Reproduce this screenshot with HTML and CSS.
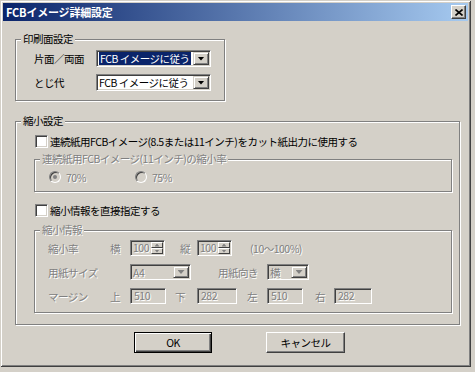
FILE: index.html
```html
<!DOCTYPE html>
<html lang="ja">
<head>
<meta charset="utf-8">
<title>FCBイメージ詳細設定</title>
<link rel="stylesheet" href="styles.css">
</head>
<body>
<div class="dlg">
	<div class="titlebar">
		<span class="ttl">FCBイメージ詳細設定</span>
		<span class="xbtn"><svg width="8" height="7" viewBox="0 0 8 7"><path d="M0.5 0.5L7.5 6.5M7.5 0.5L0.5 6.5" stroke="#000" stroke-width="1.6"/></svg></span>
	</div>
	<div class="main">
		<!-- 印刷面設定 -->
		<fieldset class="grp g1">
			<legend>印刷面設定</legend>
			<div class="g1in">
				<div class="row">
					<span class="w62">片面／両面</span>
					<div class="combo sunk w115"><span class="val"><span class="sel">FCB イメージに従う</span></span><span class="arr"><i class="tri"></i></span></div>
				</div>
				<div class="row">
					<span class="w62">とじ代</span>
					<div class="combo sunk w115"><span class="val">FCB イメージに従う</span><span class="arr"><i class="tri"></i></span></div>
				</div>
			</div>
		</fieldset>

		<!-- 縮小設定 -->
		<fieldset class="grp g2">
			<legend>縮小設定</legend>
			<div class="g2in">
				<div class="chk"><span class="cb"></span><span>連続紙用FCBイメージ(8.5または11インチ)をカット紙出力に使用する</span></div>

				<fieldset class="grp sub subA off">
					<legend>連続紙用FCBイメージ(11インチ)の縮小率</legend>
					<div class="rrow">
						<div class="ropt"><span class="rd on"></span><span>70%</span></div>
						<div class="ropt"><span class="rd"></span><span>75%</span></div>
					</div>
				</fieldset>

				<div class="chk chk2"><span class="cb"></span><span>縮小情報を直接指定する</span></div>

				<fieldset class="grp sub subB off">
					<legend>縮小情報</legend>
					<div class="bin">
						<div class="brow">
							<span class="w62">縮小率</span>
							<span class="w20">横</span>
							<div class="spin sunk"><span class="sv">100</span><span class="ud"><span class="udb"><i class="tri up"></i></span><span class="udb"><i class="tri"></i></span></span></div>
							<span class="w17 ml15">縦</span>
							<div class="spin sunk"><span class="sv">100</span><span class="ud"><span class="udb"><i class="tri up"></i></span><span class="udb"><i class="tri"></i></span></span></div>
							<span class="ml18">(10〜100%)</span>
						</div>
						<div class="brow">
							<span class="w82">用紙サイズ</span>
							<div class="combo sunk dis w61"><span class="val">A4</span><span class="arr"><i class="tri"></i></span></div>
							<span class="w49 ml27">用紙向き</span>
							<div class="combo sunk dis w42"><span class="val">横</span><span class="arr"><i class="tri"></i></span></div>
						</div>
						<div class="brow">
							<span class="w62">マージン</span>
							<span class="w20">上</span>
							<div class="fld sunk w36">510</div>
							<span class="w22 ml9">下</span>
							<div class="fld sunk w40">282</div>
							<span class="w20 ml10">左</span>
							<div class="fld sunk w36">510</div>
							<span class="w19 ml12">右</span>
							<div class="fld sunk w38">282</div>
						</div>
					</div>
				</fieldset>
			</div>
		</fieldset>

		<div class="btns">
			<div class="btn def"><span>OK</span></div>
			<div class="btn"><span>キャンセル</span></div>
		</div>
	</div>
</div>
</body>
</html>
```

FILE: styles.css
```css
*{ box-sizing:border-box;}
body{ margin:0; background:#d4d0c8; font:10.5px "MS UI Gothic","Noto Sans CJK JP",sans-serif; color:#000; letter-spacing:-0.5px;}

.dlg{ width:471px; height:367px; padding:3px; background:#d4d0c8; box-shadow:inset 1px 1px 0 #d4d0c8, inset -1px -1px 0 #404040, inset 2px 2px 0 #fff, inset -2px -2px 0 #808080;}

.titlebar{ height:18px; display:flex; align-items:center; justify-content:space-between; padding:0 2px 0 3px; background:linear-gradient(to right,#0a246a,#a6caf0); color:#fff; font-size:11px; font-weight:bold; letter-spacing:-0.2px;}
.xbtn{ width:15px; height:14px; display:flex; align-items:center; justify-content:center; background:#d4d0c8; border:1px solid; border-color:#fff #404040 #404040 #fff; box-shadow:inset -1px -1px 0 #808080;}

.main{ padding:11px 0 0 12px;}

/* group box */
.grp{ margin:0; padding:0; border:1px solid #808080; box-shadow:inset 1px 1px 0 #fff, 1px 1px 0 #fff; min-width:0;}
.grp legend{ padding:0 2px; margin-left:5px; line-height:14px; height:14px; background:#d4d0c8;}
.off,.off legend{ color:#808080; text-shadow:1px 1px 0 #fff;}

.g1{ width:210px;}
.g1in{ padding:4px 0 9px 18px; display:flex; flex-direction:column; gap:7px;}
.row{ display:flex; align-items:center; height:17px;}

.g2{ width:445px; margin-top:13px;}
.g2in{ padding:6px 0 11px 18px;}
.sub{ width:418px; margin-top:4px;}
.chk{ display:flex; align-items:center; height:14px; gap:2px; margin-left:1px; white-space:nowrap;}
.chk2{ margin-top:11px;}
.subB{ margin-top:6px;}

/* sunken 3d edge */
.sunk{ border:1px solid; border-color:#808080 #fff #fff #808080; box-shadow:inset 1px 1px 0 #404040, inset -1px -1px 0 #d4d0c8;}
.cb{ width:13px; height:13px; flex:none; background:#fff; border:1px solid; border-color:#808080 #fff #fff #808080; box-shadow:inset 1px 1px 0 #404040, inset -1px -1px 0 #d4d0c8;}

.combo{ height:17px; display:flex; align-items:center; background:#fff; padding:0 1px 0 2px;}
.combo .val{ flex:1; display:flex; align-items:center; height:13px; line-height:13px; white-space:nowrap;}
.combo .sel{ background:#0a246a; color:#fff; padding:0 1px; flex:1; height:13px; margin-right:2px;}
.combo .arr{ width:16px; height:13px; flex:none; display:flex; align-items:center; justify-content:center; background:#d4d0c8; border:1px solid; border-color:#d4d0c8 #404040 #404040 #d4d0c8; box-shadow:inset 1px 1px 0 #fff, inset -1px -1px 0 #808080;}
.combo.dis{ background:#d4d0c8; height:16px;}
.combo.dis .arr{ height:12px;}

.tri{ display:block; width:7px; height:4px; background:#000; clip-path:polygon(0 0,100% 0,50% 100%);}
.tri.up{ clip-path:polygon(50% 0,100% 100%,0 100%);}
.off .tri{ background:#808080;}

/* radios */
.rrow{ display:flex; align-items:center; height:12px; margin:5px 0 8px 14px;}
.ropt{ display:flex; align-items:center; gap:4px; width:86px;}
.ropt span:last-child{ padding-left:1px;}
.rd{ width:12px; height:12px; border-radius:50%; background:#d4d0c8; border:1px solid; border-color:#808080 #fff #fff #808080; box-shadow:inset 1px 1px 0 #404040, inset -1px -1px 0 #d4d0c8; display:flex; align-items:center; justify-content:center;}
.rd.on::after{ content:""; width:4px; height:4px; border-radius:50%; background:#808080;}

/* 縮小情報 */
.bin{ padding:3px 0 8px 13px; display:flex; flex-direction:column; gap:8px;}
.brow{ display:flex; align-items:center; height:16px; white-space:nowrap;}
.spin{ width:35px; height:16px; display:flex; background:#d4d0c8;}
.spin .sv{ flex:1; padding:1px 0 0 2px; line-height:12px;}
.ud{ width:13px; display:flex; flex-direction:column; padding:1px 1px 1px 0;}
.udb{ flex:1; display:flex; align-items:center; justify-content:center; border:1px solid; border-color:#fff #404040 #404040 #fff;}
.udb .tri{ width:5px; height:3px;}
.fld{ height:16px; background:#d4d0c8; padding:0 0 0 3px; line-height:13px;}

.w17{ width:17px;} .w19{ width:19px;} .w20{ width:20px;} .w22{ width:22px;}
.w36{ width:36px;} .w38{ width:38px;} .w40{ width:40px;} .w42{ width:42px;}
.w49{ width:49px;} .w61{ width:61px;} .w62{ width:62px;} .w82{ width:82px;} .w115{ width:115px;}
.ml9{ margin-left:9px;} .ml10{ margin-left:10px;} .ml12{ margin-left:12px;} .ml15{ margin-left:15px;}
.ml18{ margin-left:18px;} .ml27{ margin-left:27px;}
.row > span,.brow > span{ flex:none;}

/* buttons */
.btns{ display:flex; gap:54px; padding-left:119px; margin-top:7px;}
.btn{ width:78px; height:21px; display:flex; align-items:center; justify-content:center; background:#d4d0c8; border:1px solid; border-color:#fff #404040 #404040 #fff; box-shadow:inset -1px -1px 0 #808080;}
.btn + .btn{ width:79px;}
.btn.def{ border:1px solid #000; box-shadow:inset 1px 1px 0 #fff, inset -1px -1px 0 #404040, inset -2px -2px 0 #808080;}
```
